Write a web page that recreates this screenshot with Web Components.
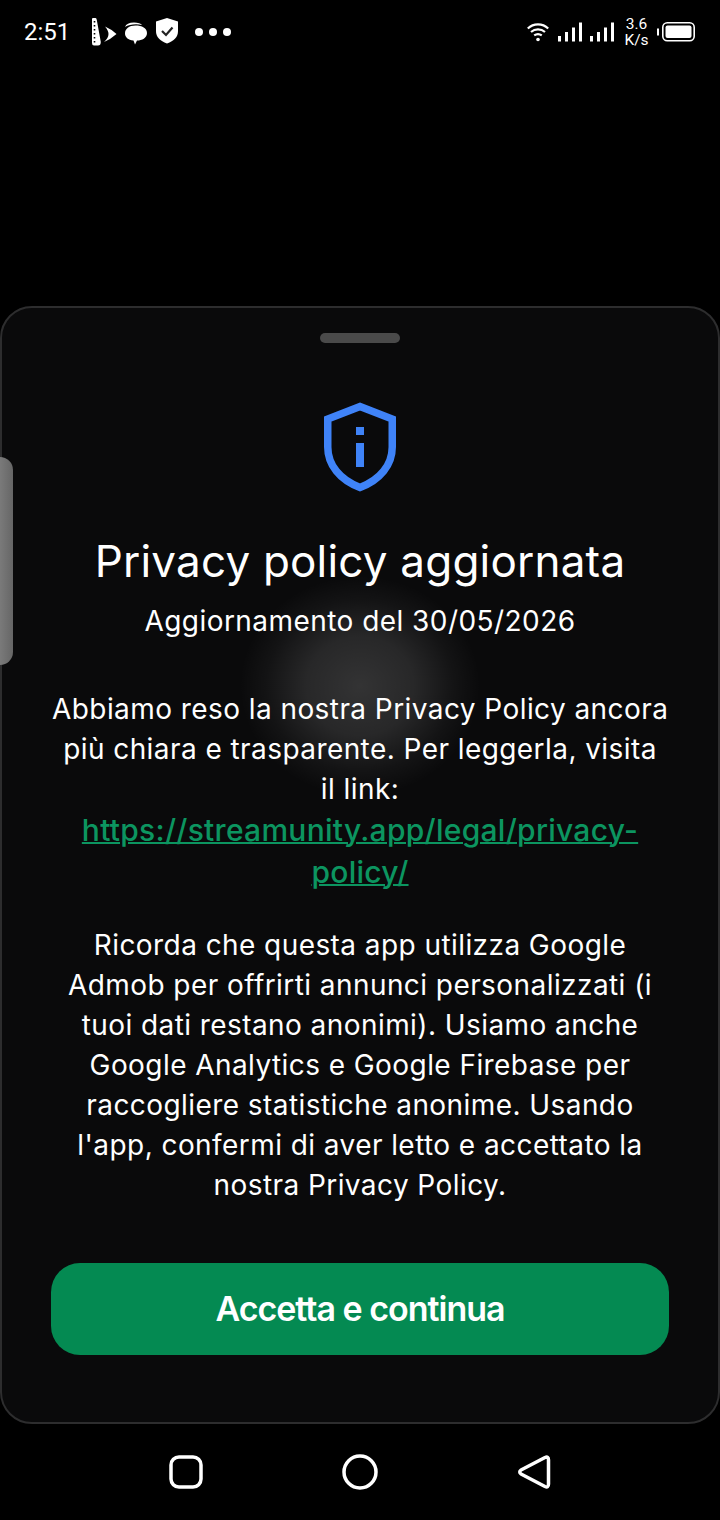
<!DOCTYPE html>
<html lang="it">
<head>
<meta charset="utf-8">
<title>Privacy policy</title>
<style>
    html, body { margin: 0; background: #000; }
    body { width: 720px; height: 1520px; overflow: hidden; font-family: Inter, "Noto Sans", sans-serif; color: #fff; display: flex; flex-direction: column; position: relative; }
</style>
</head>
<body>
<status-bar></status-bar>
<policy-sheet>
    <span slot="title">Privacy policy aggiornata</span>
    <span slot="date">Aggiornamento del 30/05/2026</span>
</policy-sheet>
<nav-bar></nav-bar>
<side-handle></side-handle>

<script>
class StatusBar extends HTMLElement {
    connectedCallback() {
        this.attachShadow({ mode: 'open' });
        this.shadowRoot.innerHTML = `
            <style>
                :host { display: flex; height: 306px; flex: none; align-items: flex-start; box-sizing: border-box; padding: 17px 25px 0 24px; justify-content: space-between; font-family: Roboto, sans-serif; color: #fff; }
                .row { display: flex; align-items: center; height: 30px; }
                .time { font-size: 24px; line-height: 30px; width: 67px; flex: none; }
                svg { display: block; flex: none; }
                .speed { font-size: 15.5px; line-height: 16px; width: 23px; text-align: center; margin: 0 9px 0 11px; white-space: nowrap; display: flex; flex-direction: column; align-items: center; }
            </style>
            <div class="row">
                <span class="time">2:51</span>
                <svg width="26" height="30" viewBox="0 0 26 30" fill="#fff">
                    <path d="M1 2Q1 1 2 1H4.500Q5.500 1 5.800 3L9.800 25Q9.800 28.500 7 28.500H3Q1 28.500 1 26Z"/>
                    <path d="M14 9.500Q20 12 25.500 17Q20 22 13 25Q17.500 21 17.500 17Q17.500 13.500 14 9.500Z"/>
                    <path d="M3.500 4v1.500M3.500 8v1.500M3.500 12v1.500M3.500 16v1.500M3.500 20v1.500M3.500 24v1.500" stroke="#000" stroke-width="1.600"/>
                </svg>
                <svg width="23" height="30" viewBox="0 0 23 30" style="margin-left:7px" fill="#fff">
                    <path d="M1 10C2 7 5 5.500 10 5.500C14 5.500 17 6.500 18 8C12 6.500 5 7.500 1 10Z"/>
                    <path d="M11.500 8.500C18 8.500 23 11 23 16C23 21 18 23.500 13 23.500L11 27.500L9.500 23.500C4 23 1 20 1 16.500C1 12 5 8.500 11.500 8.500Z"/>
                </svg>
                <svg width="22" height="30" viewBox="0 0 22 30" style="margin-left:9px">
                    <path d="M11 1L22 4.500V14C22 20 18 24 11 26.500C4 24 0 20 0 14V4.500Z" fill="#fff"/>
                    <path d="M6 14L10 18L16.500 10.500" fill="none" stroke="#222" stroke-width="2.200"/>
                </svg>
                <svg width="36" height="10" viewBox="0 0 36 10" style="margin-left:17px" fill="#fff">
                    <circle cx="4" cy="5" r="4"/><circle cx="18" cy="5" r="4"/><circle cx="32" cy="5" r="4"/>
                </svg>
            </div>
            <div class="row">
                <svg width="22" height="20" viewBox="0 0 22 20" fill="none" stroke="#fff" stroke-width="2.200">
                    <path d="M0.800 6.500C6.500 1 15.500 1 21.200 6.500"/><path d="M4 10C8 6.500 14 6.500 18 10"/><path d="M7.200 13.400C9.500 11.800 12.500 11.800 14.800 13.400"/>
                    <circle cx="11" cy="17.500" r="1.800" fill="#fff" stroke="none"/>
                </svg>
                <svg width="24" height="20" viewBox="0 0 24 20" style="margin-left:9px" fill="#fff">
                    <rect x="0" y="14" width="3" height="5.500"/><rect x="7" y="10" width="3" height="9.500"/><rect x="14" y="5.500" width="3" height="14"/><rect x="21" y="0.500" width="3" height="19"/>
                </svg>
                <svg width="24" height="20" viewBox="0 0 24 20" style="margin-left:8px" fill="#fff">
                    <rect x="0" y="14" width="3" height="5.500"/><rect x="7" y="10" width="3" height="9.500"/><rect x="14" y="5.500" width="3" height="14"/><rect x="21" y="0.500" width="3" height="19"/>
                </svg>
                <span class="speed"><span>3.6</span><span>K/s</span></span>
                <svg width="38" height="20" viewBox="0 0 38 20" fill="none">
                    <rect x="0" y="6.500" width="2" height="7" fill="#fff"/>
                    <rect x="5.800" y="0.800" width="31.400" height="18" rx="4.500" stroke="#fff" stroke-width="1.600"/>
                    <rect x="8.500" y="3.500" width="26" height="12.500" rx="2" fill="#fff"/>
                </svg>
            </div>
        `;
    }
}
customElements.define('status-bar', StatusBar);

class PolicySheet extends HTMLElement {
    connectedCallback() {
        this.attachShadow({ mode: 'open' });
        this.shadowRoot.innerHTML = `
            <style>
                :host { display: flex; flex-direction: column; align-items: center; box-sizing: border-box; position: relative; flex: none; height: 1118px; background: #0a0a0b; border: 2px solid #2d2d2e; border-radius: 32px; padding: 25px 49px 0; text-align: center; overflow: hidden; }
                .handle { width: 80px; height: 10px; border-radius: 5px; background: #4a4a4a; flex: none; }
                .shield { display: block; margin-top: 58px; flex: none; }
                h1 { margin: 42px 0 0; font-size: 44px; line-height: 52px; font-weight: 400; letter-spacing: 0.2px; white-space: nowrap; }
                .date { margin-top: 15px; font-size: 28px; line-height: 38px; letter-spacing: 0.45px; white-space: nowrap; }
                .copy { width: 616px; font-size: 28px; line-height: 40px; letter-spacing: 0.43px; position: relative; }
                .intro { margin-top: 49px; white-space: nowrap; }
                a { display: block; white-space: normal; color: #0c9560; font-size: 30px; line-height: 42px; font-weight: 500; letter-spacing: 0.28px; text-decoration: underline; text-decoration-thickness: 2px; }
                .notice { margin-top: 32px; }
                button { margin-top: 58px; width: 618px; height: 92px; flex: none; border: 0; border-radius: 29px; background: #048a52; color: #fff; font: 600 34px Inter, sans-serif; letter-spacing: -1px; padding: 0 0 2px; }
                .glow { position: absolute; left: 238px; top: 268px; width: 240px; height: 220px; background: radial-gradient(closest-side, rgba(255,255,255,.17), rgba(255,255,255,.12) 45%, rgba(255,255,255,.04) 78%, rgba(255,255,255,0)); pointer-events: none; }
            </style>
            <div class="glow"></div>
            <div class="handle"></div>
            <svg class="shield" width="76" height="92" viewBox="0 0 76 92" fill="none">
                <path d="M38 5.500L70.250 18V46C70.250 64 58 79 38 86.500C18 79 5.750 64 5.750 46V18Z" stroke="#3f83f8" stroke-width="7.500"/>
                <rect x="34" y="26" width="8" height="8" fill="#3f83f8"/>
                <rect x="34" y="42" width="8" height="24" fill="#3f83f8"/>
            </svg>
            <h1><slot name="title"></slot></h1>
            <div class="date"><slot name="date"></slot></div>
            <div class="copy intro">Abbiamo reso la nostra Privacy Policy ancora<br>più chiara e trasparente. Per leggerla, visita<br>il link:
                <a href="#">https://streamunity.app/legal/privacy-policy/</a>
            </div>
            <div class="copy notice">Ricorda che questa app utilizza Google Admob per offrirti annunci personalizzati (i tuoi dati restano anonimi). Usiamo anche Google Analytics e Google Firebase per raccogliere statistiche anonime. Usando l'app, confermi di aver letto e accettato la nostra Privacy Policy.</div>
            <button>Accetta e continua</button>
        `;
    }
}
customElements.define('policy-sheet', PolicySheet);

class NavBar extends HTMLElement {
    connectedCallback() {
        this.attachShadow({ mode: 'open' });
        this.shadowRoot.innerHTML = `
            <style>
                :host { display: flex; flex: 1; align-items: center; justify-content: center; }
                svg { display: block; }
                .wrap { width: 174px; display: flex; justify-content: center; }
            </style>
            <div class="wrap"><svg width="34" height="34" viewBox="0 0 34 34" fill="none" stroke="#fff" stroke-width="3.500"><rect x="2" y="2" width="30" height="30" rx="8"/></svg></div>
            <div class="wrap"><svg width="36" height="36" viewBox="0 0 36 36" fill="none" stroke="#fff" stroke-width="3.500"><circle cx="18" cy="18" r="16"/></svg></div>
            <div class="wrap"><svg width="34" height="36" viewBox="0 0 34 36" fill="none" stroke="#fff" stroke-width="3.500" stroke-linejoin="round"><path d="M28 3.500Q31.500 2 31.500 6V30Q31.500 34 28 32.500L4 20Q1.500 18 4 16Z"/></svg></div>
        `;
    }
}
customElements.define('nav-bar', NavBar);

class SideHandle extends HTMLElement {
    connectedCallback() {
        this.attachShadow({ mode: 'open' });
        this.shadowRoot.innerHTML = `
            <style>
                :host { position: absolute; left: 0; top: 457px; width: 13px; height: 208px; background: linear-gradient(90deg, #7a7a7a, #666); border-radius: 0 14px 14px 0; }
            </style>
        `;
    }
}
customElements.define('side-handle', SideHandle);
</script>
</body>
</html>
